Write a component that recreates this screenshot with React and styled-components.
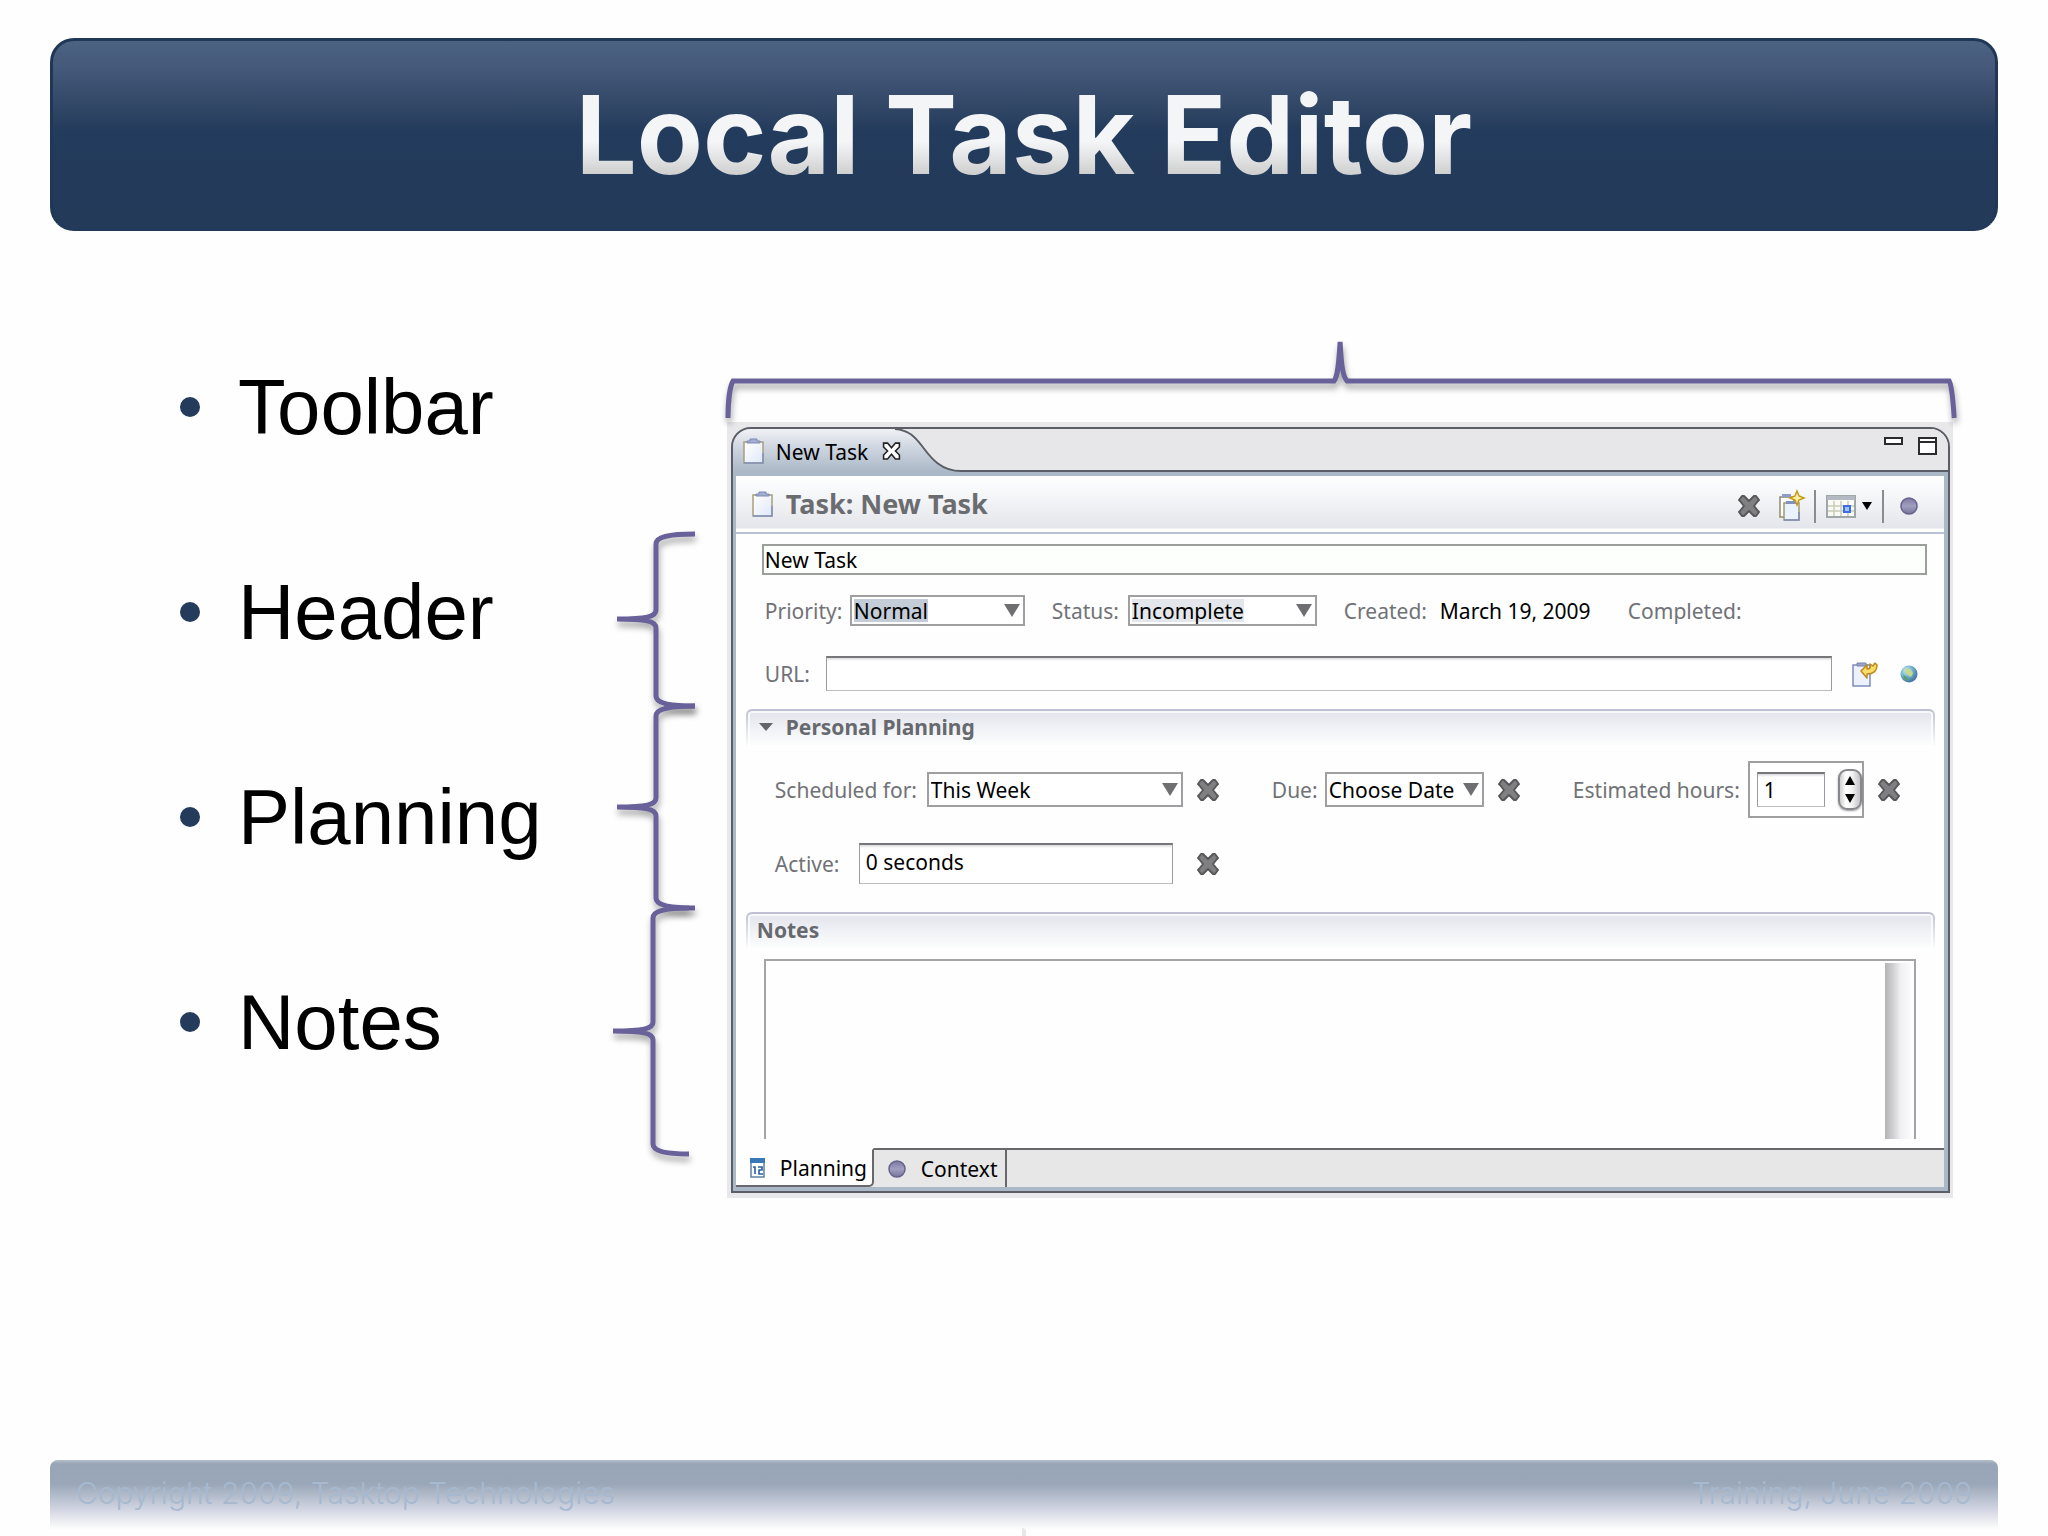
import { useState } from "react"
import styled, { createGlobalStyle, css } from "styled-components"

const GlobalStyle = createGlobalStyle`
  * { box-sizing: border-box; }
  body {
    margin: 0;
    background: #fefefe;
    font-family: "Noto Sans", "Open Sans", sans-serif;
  }
  button { padding: 0; border: none; background: none; cursor: pointer; font: inherit; }
  svg { display: block; overflow: visible; }
`

const Page = styled.div`
  min-height: 100vh;
  display: flex;
  flex-direction: column;
  padding: 38px 50px 0;
`

const Banner = styled.header`
  height: 193px;
  display: flex;
  align-items: center;
  justify-content: center;
  border: 3px solid #203856;
  border-bottom-color: #22395a;
  border-radius: 24px;
  background: linear-gradient(#4c6382, #45597a 14%, #334867 34%, #233b5c 48%, #233a59);
`

const Title = styled.h1`
  margin: 0;
  font: bold 108px/130px Inter, sans-serif;
  color: transparent;
  background: linear-gradient(#f4f5f7 55%, #e6e7e8 65%, #cccccc 82%);
  background-clip: text;
`

const Main = styled.main`
  flex: 1;
  display: grid;
  grid-template-columns: minmax(0, 26fr) 116px minmax(0, 74fr);
  align-items: start;
  padding: 0 45px 0 130px;
`

const Topics = styled.ul`
  list-style: none;
  margin: 0;
  padding: 131px 0 0;
  display: flex;
  flex-direction: column;
  gap: 115px;
  li {
    display: flex;
    align-items: center;
    gap: 38px;
    font: 78px/90px "Liberation Sans", Arial, sans-serif;
    color: #000;
  }
  li::before {
    content: "";
    width: 20px;
    height: 20px;
    border-radius: 50%;
    background: #243b5b;
  }
`

const braceLine = css`
  fill: none;
  stroke: #68619a;
  stroke-width: 5;
  filter: drop-shadow(1px 5px 3px rgba(0, 0, 0, 0.35));
`

const SideBraces = styled.div`
  display: flex;
  flex-direction: column;
  padding-top: 303px;
  svg { ${braceLine} }
`

const TopBrace = styled.svg`
  width: 100%;
  height: 82px;
  ${braceLine}
`

const Shot = styled.div`
  padding-top: 109px;
`

const Surround = styled.div`
  padding: 5px 3px 5px 4px;
  background: #e8e8ea;
`

const Frame = styled.section`
  border: 2px solid #5b5e66;
  border-radius: 20px 20px 0 0;
  background: #abb8c7;
  overflow: hidden;
`

const TabBar = styled.div`
  display: flex;
  height: 43px;
  background: linear-gradient(#f1f2f5, #cdd5df 45%, #abb8c7);
`

const EditorTab = styled.div`
  width: 162px;
  display: flex;
  align-items: center;
  padding: 0 0 0 10px;
  font-size: 21px;
  span { margin: 3px 14px 0 12px; white-space: nowrap; }
`

const TabSpace = styled.div`
  flex: 1;
  display: flex;
  justify-content: flex-end;
  align-items: flex-start;
  gap: 15px;
  padding: 8px 11px 0 0;
  background: #e7e7e9;
  border-bottom: 2px solid #5b5e66;
`

const Body = styled.div`
  margin: 4px 4px 4px 3px;
  background: #fdfefd;
`

const FormHead = styled.div`
  height: 58px;
  display: flex;
  align-items: center;
  padding: 0 26px 0 16px;
  background: linear-gradient(#fff, #f1f2f5 50%, #e5e6eb 92%, #fff 96%);
  border-bottom: 2px solid #b9c1d4;
  h2 { margin: 0 auto 0 13px; font-size: 27px; line-height: 36px; color: #6a6c70; }
`

const Tools = styled.div`
  display: flex;
  align-items: center;
  gap: 10px;
  padding-top: 4px;
`

const ToolGroup = styled.span`
  display: flex;
  align-items: center;
  gap: 6px;
`

const Divider = styled.span`
  width: 2px;
  height: 33px;
  background: #8b8b90;
`

const Row = styled.div`
  display: flex;
  align-items: center;
  font-size: 21px;
  line-height: 28px;
  white-space: nowrap;
  margin-top: ${(p) => p.$top}px;
  padding: 0 ${(p) => p.$right || 17}px 0 ${(p) => p.$left || 29}px;
`

const Label = styled.label`
  flex: none;
  width: ${(p) => p.$w}px;
  margin-left: ${(p) => p.$gap || 0}px;
  color: #717277;
`

const Value = styled.span`
  width: 161px;
`

const field = css`
  min-width: 0;
  margin: 0;
  font: 21px/28px "Noto Sans", "Open Sans", sans-serif;
  color: #000;
  border-radius: 0;
  outline: none;
  appearance: none;
`

const NameInput = styled.input`
  ${field}
  flex: 1;
  height: 31px;
  padding: 0 1px;
  border: 2px solid #9c9e9c;
  background: #fdfffc;
`

const SunkenInput = styled.input`
  ${field}
  flex: ${(p) => (p.$w ? "none" : 1)};
  width: ${(p) => (p.$w ? p.$w + "px" : "auto")};
  height: ${(p) => p.$h || 35}px;
  padding: 0 6px ${(p) => (p.$h ? 4 : 0)}px;
  border: 1px solid #9b9b9f;
  border-top: 2px solid #77777b;
  border-bottom-color: #bcbcc0;
  background: linear-gradient(#dadadc, #fff 3px);
`

const Picker = styled.span`
  flex: none;
  display: grid;
  align-items: center;
  width: ${(p) => p.$w}px;
  select, svg { grid-area: 1 / 1; }
  svg { justify-self: end; margin-right: 5px; pointer-events: none; }
`

const PickerSelect = styled.select`
  ${field}
  width: 100%;
  height: ${(p) => p.$h}px;
  padding: 0 2px;
  border: 2px solid #9f9fa2;
  background: #fff;
  ${(p) =>
    p.$mark &&
    css`
      background: linear-gradient(${p.$mark}, ${p.$mark}) 2px 2px / ${p.$markWidth}px 23px no-repeat #fff;
    `}
`

const IconButton = styled.button`
  flex: none;
  display: grid;
  place-items: center;
  margin-left: ${(p) => p.$gap || 0}px;
`

const SectionHead = styled.h3`
  display: flex;
  align-items: flex-start;
  gap: 13px;
  height: 38px;
  margin: ${(p) => p.$top}px 9px 0 10px;
  padding: 1px 0 0 ${(p) => p.$left}px;
  font-size: 21px;
  line-height: 30px;
  color: #66696e;
  border: 2px solid transparent;
  border-top-color: #bfc0d2;
  border-bottom: none;
  border-radius: 6px 6px 0 0;
  background:
    linear-gradient(#e3e4ec, #f1f2f6 50%, #fdfefd) padding-box,
    linear-gradient(#bfc0d2, #fdfefd) border-box;
  box-shadow: inset 0 0 0 2px rgba(255, 255, 255, 0.7);
  svg { margin-top: 11px; }
`

const SpinBox = styled.span`
  flex: none;
  display: flex;
  align-items: center;
  justify-content: space-between;
  width: 116px;
  height: 57px;
  padding: 0 0 0 7px;
  border: 2px solid #9f9fa2;
  background: #fff;
`

const Stepper = styled.span`
  display: flex;
  flex-direction: column;
  width: 24px;
  height: 41px;
  border: 2px solid #88888c;
  border-radius: 9px;
  background: linear-gradient(90deg, #cfcfd1, #fff 30%, #f3f3f4 60%, #c4c4c6);
  box-shadow: 0 1px 2px rgba(0, 0, 0, 0.4);
  button { flex: 1; display: grid; place-items: center; }
`

const NotesBox = styled.div`
  display: flex;
  height: 180px;
  margin: 9px 28px 9px;
  padding: 2px 3px 0 0;
  border: 2px solid #a2a4a6;
  border-bottom: none;
  textarea {
    ${field}
    flex: 1;
    border: none;
    resize: none;
    background: transparent;
  }
`

const ScrollTrack = styled.span`
  width: 26px;
  background: linear-gradient(90deg, #b4b4b6, #cfcfd1 30%, #f0f0f3 60%, #fbfbfd);
`

const PageTabs = styled.div`
  display: flex;
  height: 39px;
  background: #e7e7e8;
`

const PageTab = styled.button`
  display: flex;
  align-items: center;
  gap: 15px;
  width: ${(p) => p.$w}px;
  padding-left: 14px;
  font-size: 21px;
  line-height: 28px;
  border-top: 2px solid #66686c;
  border-right: 2px solid #66686c;
  ${(p) =>
    p.$active &&
    css`
      background: #fdfefd;
      border-top-color: transparent;
      border-bottom: 2px solid #66686c;
      border-bottom-right-radius: 5px;
    `}
`

const TabsRest = styled.div`
  flex: 1;
  border-top: 2px solid #66686c;
`

const Footer = styled.footer`
  display: flex;
  flex-direction: column;
  height: 76px;
  border-radius: 8px 8px 0 0;
  background: linear-gradient(#b3bfcb, #98a5b6 4px, #9aa7b8 24px, #b3bccb 36px, #d3d6e3 50px, #eeeff2 62px, #fefefe 70px);
`

const FooterText = styled.div`
  display: flex;
  justify-content: space-between;
  padding: 14px 26px 0;
  height: 68px;
  font: 300 30px/38px Inter, sans-serif;
  color: #a6b9d0;
`

const FooterMark = styled.span`
  align-self: center;
  width: 4px;
  height: 8px;
  border-radius: 0 4px 0 0;
  background: #e6e7e9;
`

function SideBrace({ height, tip, line = 45, end = 84, start = 6 }) {
  const d = `M${end} 0C${line + 12} 0 ${line} 3 ${line} 10V${tip - 9}C${line} ${tip - 2} ${line - 10} ${tip} ${start} ${tip}
    C${line - 10} ${tip} ${line} ${tip + 2} ${line} ${tip + 9}V${height - 10}C${line} ${height - 3} ${line + 12} ${height} ${end} ${height}`
  return (
    <svg width="86" height={height} aria-hidden="true">
      <path d={d} />
    </svg>
  )
}

function Cross({ size = 24 }) {
  return (
    <svg width={size} height={size} viewBox="0 0 24 24">
      <path
        d="M5 2l2 0 5 5 5-5 2 0 3 4-1 1-4 5 4 5 1 1-3 4-2 0-5-5-5 5-2 0-3-4 1-1 4-5-4-5-1-1z"
        fill="#808083" stroke="#58585b" strokeWidth="2" strokeLinejoin="round"
      />
    </svg>
  )
}

function Clipboard() {
  return (
    <svg width="21" height="26" viewBox="0 0 21 26">
      <defs>
        <linearGradient id="sheet" x2="1" y2="1">
          <stop offset="0" stopColor="#fff" />
          <stop offset="1" stopColor="#dfe8f8" />
        </linearGradient>
      </defs>
      <path d="M1 4h19v21h-19z" fill="url(#sheet)" stroke="#a89f78" strokeWidth="1.5" />
      <path d="M1 25h19v-10" fill="none" stroke="#8492bd" strokeWidth="1.5" />
      <path d="M4 5v-2h3v-2h7v2h3v2z" fill="#a3aed2" stroke="#7d89b4" />
    </svg>
  )
}

function NewTaskIcon() {
  return (
    <svg width="25" height="30" viewBox="0 0 25 30">
      <path d="M1 6h14v20h-14z" fill="#fff" stroke="#8f8a70" strokeWidth="1.5" />
      <path d="M3 5v-2h9v3h-9z" fill="#8f9cc8" />
      <path d="M5 12h15v17h-15z" fill="#eaf2fd" stroke="#a39a6e" strokeWidth="1.5" />
      <path d="M5 29h15v-8" fill="none" stroke="#7f8fc0" strokeWidth="1.5" />
      <path d="M7 12v-2h11v3h-11z" fill="#8391c2" />
      <path d="M18 0l2 5 5 2-5 2-2 5-2-5-5-2 5-2z" fill="#fdf0a0" stroke="#c49a1a" strokeWidth="1.5" />
    </svg>
  )
}

function CalendarIcon() {
  return (
    <svg width="30" height="23" viewBox="0 0 30 23">
      <path d="M1 1h28v21h-28z" fill="#fbfbf6" stroke="#a0a7ab" strokeWidth="2" />
      <path d="M1 1h28v4h-28z" fill="#b3b9c1" />
      <path d="M8 6v15M15 6v15M22 6v15M2 11h26M2 16h26" stroke="#c9cdb8" strokeWidth="1.5" />
      <path d="M18 11h6v6h-6z" fill="#9cc3ff" stroke="#3f6ce4" strokeWidth="2" />
    </svg>
  )
}

function Ball() {
  return (
    <svg width="18" height="18" viewBox="0 0 18 18">
      <defs>
        <linearGradient id="ball" x2="0" y2="1">
          <stop offset="0" stopColor="#7b789f" />
          <stop offset=".5" stopColor="#a19fc0" />
          <stop offset="1" stopColor="#77749c" />
        </linearGradient>
      </defs>
      <circle cx="9" cy="9" r="8" fill="url(#ball)" stroke="#65628c" strokeWidth="1.5" />
    </svg>
  )
}

function PasteIcon() {
  return (
    <svg width="28" height="26" viewBox="0 0 28 26">
      <path d="M2 4h17v21h-17z" fill="#edf1fb" stroke="#7f8cba" strokeWidth="1.5" />
      <path d="M6 5v-3h9v3z" fill="#9aa5c6" stroke="#7b86ad" />
      <path d="M10 10l6-6v4c3 0 4-1 3-5l3 2 2-3 2 2c0 7-4 9-10 9v4z" fill="#fbdc6a" stroke="#b98a1c" strokeWidth="1.5" strokeLinejoin="round" />
    </svg>
  )
}

function Globe() {
  return (
    <svg width="18" height="18" viewBox="0 0 18 18">
      <defs>
        <radialGradient id="globe" cx=".35" cy=".3" r=".75">
          <stop offset="0" stopColor="#cdeaf4" />
          <stop offset=".5" stopColor="#6fb0cf" />
          <stop offset="1" stopColor="#3d6b9e" />
        </radialGradient>
      </defs>
      <circle cx="9" cy="9" r="8.5" fill="url(#globe)" />
      <path d="M6 3l4 1 3 4-2 4-3-2-3-3z" fill="#c8d98a" />
      <path d="M3 10l4 2 2 4-4-1z" fill="#57a070" />
    </svg>
  )
}

function DayIcon() {
  return (
    <svg width="15" height="20" viewBox="0 0 15 20">
      <path d="M1 1h13v18h-13z" fill="#fff" stroke="#5f7fa6" strokeWidth="1.5" />
      <path d="M0 0h15v5h-15z" fill="#3a77b8" />
      <path d="M3 9h2v7M8 9h4v3h-3v4h4" fill="none" stroke="#2a5f9e" strokeWidth="1.6" />
    </svg>
  )
}

const Triangle = ({ w = 16, h = 13, up, fill = "#6f6f72" }) => (
  <svg width={w} height={h} viewBox="0 0 16 13" preserveAspectRatio="none">
    <path d={up ? "M0 13h16l-8-13z" : "M0 0h16l-8 13z"} fill={fill} />
  </svg>
)

function Select({ id, w, h, value, options, mark, markWidth }) {
  return (
    <Picker $w={w}>
      <PickerSelect id={id} $h={h} $mark={mark} $markWidth={markWidth} defaultValue={value}>
        {options.map((o) => <option key={o}>{o}</option>)}
      </PickerSelect>
      <Triangle />
    </Picker>
  )
}

const topics = ["Toolbar", "Header", "Planning", "Notes"]

export default function App() {
  const [hours, setHours] = useState(1)
  const [page, setPage] = useState("Planning")

  return (
    <Page>
      <GlobalStyle />
      <Banner>
        <Title>Local Task Editor</Title>
      </Banner>
      <Main>
        <Topics>
          {topics.map((t) => <li key={t}>{t}</li>)}
        </Topics>
        <SideBraces>
          <SideBrace height={172} tip={85} />
          <SideBrace height={202} tip={101} />
          <SideBrace height={246} tip={123} line={42} end={78} start={2} />
        </SideBraces>
        <Shot>
          <TopBrace viewBox="0 0 1226 82" preserveAspectRatio="none" aria-hidden="true">
            <path d="M1 78C1 62 3 46 6 41H607C611 36 612 20 613 2C614 20 615 36 620 41H1222C1225 46 1226 62 1227 78" />
          </TopBrace>
          <Surround>
            <Frame>
              <TabBar>
                <EditorTab>
                  <Clipboard />
                  <span>New Task</span>
                  <IconButton aria-label="Close tab">
                    <svg width="19" height="20" viewBox="0 0 24 24">
                      <path d="M2 2h5l5 6 5-6h5v5l-5 5 5 5v5h-5l-5-6-5 6h-5v-5l5-5-5-5z" fill="#fff" stroke="#222" strokeWidth="2" />
                    </svg>
                  </IconButton>
                </EditorTab>
                <svg width="66" height="43">
                  <path d="M0 0C14 1 20 8 27 17S44 42 66 42V0z" fill="#e7e7e9" />
                  <path d="M0 0C14 1 20 8 27 17S44 42 66 42" fill="none" stroke="#5b5e66" strokeWidth="2" />
                </svg>
                <TabSpace>
                  <IconButton aria-label="Minimize">
                    <svg width="19" height="8"><path d="M1 1h17v6h-17z" fill="#fff" stroke="#2b2b2e" strokeWidth="2" /></svg>
                  </IconButton>
                  <IconButton aria-label="Maximize">
                    <svg width="19" height="18"><path d="M1 1h17v16h-17zM1 5h17" fill="#fff" stroke="#2b2b2e" strokeWidth="2" /></svg>
                  </IconButton>
                </TabSpace>
              </TabBar>
              <Body>
                <FormHead>
                  <Clipboard />
                  <h2>Task: New Task</h2>
                  <Tools>
                    <IconButton aria-label="Delete"><Cross /></IconButton>
                    <IconButton aria-label="New subtask" $gap={8}><NewTaskIcon /></IconButton>
                    <Divider />
                    <ToolGroup>
                      <IconButton aria-label="Schedule"><CalendarIcon /></IconButton>
                      <IconButton aria-label="Schedule options"><Triangle w={10} h={8} fill="#000" /></IconButton>
                    </ToolGroup>
                    <Divider />
                    <IconButton aria-label="Activate" $gap={6}><Ball /></IconButton>
                  </Tools>
                </FormHead>
                <Row $top={10} $left={26}>
                  <NameInput aria-label="Summary" defaultValue="New Task" />
                </Row>
                <Row $top={20}>
                  <Label htmlFor="priority" $w={85}>Priority:</Label>
                  <Select id="priority" w={175} h={31} value="Normal" options={["High", "Normal", "Low"]} mark="#c3ccd7" markWidth={74} />
                  <Label htmlFor="status" $w={76} $gap={27}>Status:</Label>
                  <Select id="status" w={189} h={31} value="Incomplete" options={["Incomplete", "Complete"]} mark="#e3e6ea" markWidth={112} />
                  <Label as="span" $w={96} $gap={27}>Created:</Label>
                  <Value>March 19, 2009</Value>
                  <Label as="span" $w={116} $gap={27}>Completed:</Label>
                </Row>
                <Row $top={30} $right={26}>
                  <Label htmlFor="url" $w={61}>URL:</Label>
                  <SunkenInput id="url" />
                  <IconButton aria-label="Retrieve title" $gap={19}><PasteIcon /></IconButton>
                  <IconButton aria-label="Open in browser" $gap={21}><Globe /></IconButton>
                </Row>
                <SectionHead $top={18} $left={11}>
                  <Triangle w={14} h={8} fill="#63646a" />
                  Personal Planning
                </SectionHead>
                <Row $top={14} $left={39}>
                  <Label htmlFor="scheduled" $w={152}>Scheduled for:</Label>
                  <Select id="scheduled" w={256} h={35} value="This Week" options={["Today", "This Week", "Next Week"]} />
                  <IconButton aria-label="Clear schedule" $gap={13}><Cross /></IconButton>
                  <Label htmlFor="due" $w={53} $gap={52}>Due:</Label>
                  <Select id="due" w={159} h={35} value="Choose Date" options={["Choose Date"]} />
                  <IconButton aria-label="Clear due date" $gap={13}><Cross /></IconButton>
                  <Label htmlFor="hours" $w={175} $gap={52}>Estimated hours:</Label>
                  <SpinBox>
                    <SunkenInput id="hours" $w={68} value={hours} onChange={(e) => setHours(e.target.value)} />
                    <Stepper>
                      <button aria-label="More hours" onClick={() => setHours(Number(hours) + 1)}><Triangle w={10} h={9} up fill="#000" /></button>
                      <button aria-label="Fewer hours" onClick={() => setHours(Number(hours) - 1)}><Triangle w={10} h={9} fill="#000" /></button>
                    </Stepper>
                  </SpinBox>
                  <IconButton aria-label="Clear estimate" $gap={13}><Cross /></IconButton>
                </Row>
                <Row $top={25} $left={39}>
                  <Label htmlFor="active" $w={84}>Active:</Label>
                  <SunkenInput id="active" $w={314} $h={41} defaultValue="0 seconds" />
                  <IconButton aria-label="Clear active time" $gap={23}><Cross /></IconButton>
                </Row>
                <SectionHead $top={28} $left={9}>Notes</SectionHead>
                <NotesBox>
                  <textarea aria-label="Notes" />
                  <ScrollTrack />
                </NotesBox>
                <PageTabs>
                  <PageTab $w={138} $active={page === "Planning"} onClick={() => setPage("Planning")}><DayIcon />Planning</PageTab>
                  <PageTab $w={133} $active={page === "Context"} onClick={() => setPage("Context")}><Ball />Context</PageTab>
                  <TabsRest />
                </PageTabs>
              </Body>
            </Frame>
          </Surround>
        </Shot>
      </Main>
      <Footer>
        <FooterText>
          <span>Copyright 2009, Tasktop Technologies</span>
          <span>Training, June 2009</span>
        </FooterText>
        <FooterMark />
      </Footer>
    </Page>
  )
}
